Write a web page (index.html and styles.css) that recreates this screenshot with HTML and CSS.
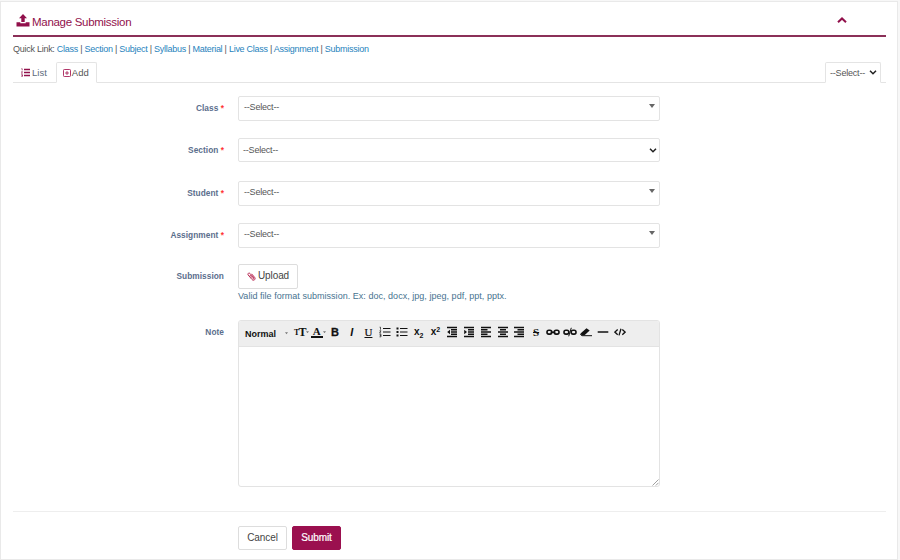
FILE: index.html
```html
<!DOCTYPE html>
<html lang="en">
<head>
<meta charset="utf-8">
<title>Manage Submission</title>
<link rel="stylesheet" href="styles.css">
</head>
<body>
<main class="panel">
  <header class="title-bar">
    <svg class="title-icon" viewBox="0 0 14 13"><path d="M7 0 11 4.2H8.7V8H5.3V4.2H3ZM.5 8.3H4.3V9.3H9.7V8.3H13.5V12.4H.5Z"/></svg>
    <h1>Manage Submission</h1>
    <svg class="collapse" viewBox="0 0 10 6"><path d="M1 5.2 5 1.4 9 5.2"/></svg>
  </header>
  <nav class="quick"><span>Quick Link: </span><a>Class</a> | <a>Section</a> | <a>Subject</a> | <a>Syllabus</a> | <a>Material</a> | <a>Live Class</a> | <a>Assignment</a> | <a>Submission</a></nav>
  <div class="tabs">
    <div class="tab"><svg class="list-icon" viewBox="0 0 9 9"><path d="M3 1.5H9M3 4.5H9M3 7.5H9" stroke-width="1.3"/><path d="M.4.7H1.2V2.4M.3 3.7H1.5L.4 5.3H1.6M.3 6.6H1.5V8.4H.3M.6 7.5H1.5" stroke-width=".7"/></svg>List</div>
    <div class="tab active"><svg class="add-icon" viewBox="0 0 8 8"><rect x=".5" y=".5" width="7" height="7" rx=".8"/><path d="M4 2.1V5.9M2.1 4H5.9"/></svg>Add</div>
    <div class="tab filter">--Select--<svg class="chevron" viewBox="0 0 8 5"><path d="M1 .8 4 3.8 7 .8"/></svg></div>
  </div>
  <form class="form">
    <div class="row r1"><label>Class <i>*</i></label><div class="control">--Select--<svg class="arrow" viewBox="0 0 6 4"><path d="M0 0H6L3 4Z"/></svg></div></div>
    <div class="row r2"><label>Section <i>*</i></label><div class="control native">--Select--<svg class="chevron" viewBox="0 0 8 5"><path d="M1 .8 4 3.8 7 .8"/></svg></div></div>
    <div class="row r3"><label>Student <i>*</i></label><div class="control">--Select--<svg class="arrow" viewBox="0 0 6 4"><path d="M0 0H6L3 4Z"/></svg></div></div>
    <div class="row r4"><label>Assignment <i>*</i></label><div class="control">--Select--<svg class="arrow" viewBox="0 0 6 4"><path d="M0 0H6L3 4Z"/></svg></div></div>
    <div class="row r5"><label>Submission</label>
      <div>
        <div class="btn upload"><svg class="clip" viewBox="0 0 9 9"><path d="M2.8 3 6 6.6C6.6 7.2 7.4 6.5 6.9 5.9L3 1.5C1.9.3.2 1.8 1.2 3L5 7.5C6.7 9.4 9.2 7.1 7.6 5.3L4.5 1.8"/></svg>Upload</div>
        <p class="hint">Valid file format submission. Ex: doc, docx, jpg, jpeg, pdf, ppt, pptx.</p>
      </div>
    </div>
    <div class="row r6"><label>Note</label>
      <div class="editor">
        <div class="toolbar">
          <span class="style">Normal</span><svg class="caret" viewBox="0 0 3 2"><path d="M0 0H3L1.5 2Z"/></svg>
          <div class="tools">
            <span class="serif tt"><small>T</small>T<svg class="caret" viewBox="0 0 3 2"><path d="M0 0H3L1.5 2Z"/></svg></span>
            <span class="serif color"><b>A</b><svg class="caret" viewBox="0 0 3 2"><path d="M0 0H3L1.5 2Z"/></svg></span>
            <span class="bold">B</span>
            <span class="italic">I</span>
            <span class="serif under">U</span>
            <svg viewBox="0 0 12 12"><path d="M4 2.5H11.5M4 6H11.5M4 9.5H11.5"/><path class="thin" d="M.6 1.2H1.5V3.7M.5 4.8H2L.6 7H2.1M.5 8.3H2V10.8H.5M.8 9.5H2"/></svg>
            <svg viewBox="0 0 12 12"><path d="M4 2.5H11.5M4 6H11.5M4 9.5H11.5"/><path class="fill" d="M.5 1.5h2v2h-2ZM.5 5h2v2h-2ZM.5 8.5h2v2h-2Z"/></svg>
            <span class="script">x<sub>2</sub></span>
            <span class="script">x<sup>2</sup></span>
            <svg viewBox="0 0 12 12"><path class="thick" d="M1 1.5H11M5 3.8H11M5 6H11M5 8.2H11M1 10.5H11"/><path class="fill" d="M4 3.8V8.2L1.2 6Z"/></svg>
            <svg viewBox="0 0 12 12"><path class="thick" d="M1 1.5H11M5 3.8H11M5 6H11M5 8.2H11M1 10.5H11"/><path class="fill" d="M1.2 3.8V8.2L4 6Z"/></svg>
            <svg viewBox="0 0 12 12"><path class="thick" d="M1 1.5H11M1 3.8H7.5M1 6H11M1 8.2H7.5M1 10.5H11"/></svg>
            <svg viewBox="0 0 12 12"><path class="thick" d="M1 1.5H11M3 3.8H9M1 6H11M3 8.2H9M1 10.5H11"/></svg>
            <svg viewBox="0 0 12 12"><path class="thick" d="M1 1.5H11M4.5 3.8H11M1 6H11M4.5 8.2H11M1 10.5H11"/></svg>
            <span class="serif strike">S</span>
            <svg class="wide" viewBox="0 0 14 12"><rect class="thick" x="1" y="4.3" width="4.8" height="3.8" rx="1.8"/><rect class="thick" x="8.2" y="4.3" width="4.8" height="3.8" rx="1.8"/><path class="thick" d="M4.6 6.2H9.4"/></svg>
            <svg class="wide" viewBox="0 0 14 12"><rect class="thick" x="1" y="4.3" width="4.8" height="3.8" rx="1.8"/><rect class="thick" x="8.2" y="4.3" width="4.8" height="3.8" rx="1.8"/><path d="M8.3 1.8 5.7 10.3"/></svg>
            <svg class="wide" viewBox="0 0 14 12"><path class="fill" d="M1.5 7.6 7.5 2.2 10.7 4.4 5.5 9.2H2.6Z"/><path d="M1.2 8.2 3 9.7H13"/></svg>
            <svg viewBox="0 0 12 12"><path class="thick" d="M.7 6H11.3"/></svg>
            <svg viewBox="0 0 12 12"><path class="code" d="M3.7 3.5.9 6.1 3.7 8.7M8.3 3.5 11.1 6.1 8.3 8.7M7 2.8 5 9.4"/></svg>
          </div>
        </div>
        <div class="area"><svg class="grip" viewBox="0 0 7 7"><path d="M.5 6.5 6.5.5M3.8 6.5 6.5 3.8"/></svg></div>
      </div>
    </div>
    <footer class="actions"><div class="btn">Cancel</div><div class="btn primary">Submit</div></footer>
  </form>
</main>
</body>
</html>
```
FILE: styles.css
```css
* { box-sizing: border-box; }
body { margin: 0; height: 560px; padding: 1px 1px 0 0; background: #f7f7f7; font: 9px/12px "Liberation Sans", Arial, sans-serif; color: #555; overflow: hidden; }
svg { display: block; flex: none; fill: none; stroke: currentColor; }
.panel { width: 898px; height: 559px; padding: 0 12px; background: #fff; border: 1px solid #e9e9e9; }
.title-bar { display: flex; align-items: center; width: 873px; height: 35px; padding: 6px 39px 0 3px; border-bottom: 2px solid #8b3058; color: #91104b; }
.title-icon { width: 14px; height: 13px; fill: currentColor; stroke: none; margin-top: -2px; }
h1 { margin: 0 auto 0 2px; font-size: 11.5px; font-weight: 400; letter-spacing: -.29px; }
.collapse { width: 10px; height: 6px; stroke-width: 2; margin-top: -3px; }
.quick { height: 25px; padding-top: 6px; white-space: pre; letter-spacing: -.265px; }
.quick a { color: #2783bd; }
.tabs { display: flex; width: 873px; height: 21px; border-bottom: 1px solid #e4e4e4; }
.tab { display: flex; align-items: center; height: 21px; padding: 0 8px; color: #5d6b7c; font-size: 9.5px; }
.list-icon { width: 9px; height: 9px; margin-right: 2px; color: #91104b; }
.add-icon { width: 8px; height: 8px; margin-right: 1px; color: #a82058; stroke-width: .9; }
.active, .filter { border: 1px solid #e4e4e4; border-bottom-color: #fff; border-radius: 2px 2px 0 0; color: #555; }
.active { width: 41px; padding: 0 6px; margin-left: 1px; }
.filter { width: 56px; margin: 0 5px 0 auto; padding: 0 3px 0 4px; font-size: 9px; letter-spacing: -.2px; justify-content: space-between; }
.chevron { width: 8px; height: 5px; color: #222; stroke-width: 1.5; }
.form { width: 873px; padding-top: 13px; }
.row { display: grid; grid-template-columns: 212px 422px; column-gap: 13px; }
.r1 { height: 42px; } .r2 { height: 43px; } .r3 { height: 42px; } .r4 { height: 41px; } .r5 { height: 56px; } .r6 { height: 191px; }
label { padding-top: 6px; margin-right: 1px; text-align: right; font-size: 8.3px; font-weight: 700; letter-spacing: .05px; color: #5b6e8c; }
label i { color: #f33; font-style: normal; }
.control { display: flex; justify-content: space-between; height: 25px; padding: 4px 4px 0 5px; border: 1px solid #e3e3e3; border-radius: 2px; letter-spacing: -.2px; }
.native { height: 24px; padding: 5px 2px 0 4px; }
.arrow { width: 6px; height: 4px; margin-top: 3px; fill: #666; stroke: none; }
.native .chevron { margin-top: 4px; }
.btn { display: flex; align-items: center; justify-content: center; width: 49px; height: 24px; border: 1px solid #ddd; border-radius: 2px; color: #444; font-size: 10px; letter-spacing: -.08px; }
.upload { width: 60px; height: 25px; gap: 2px; padding-bottom: 1px; }
.clip { width: 9px; height: 9px; color: #b82852; stroke-width: 1; }
.hint { margin: 1px 0 0; color: #477390; white-space: nowrap; letter-spacing: .03px; }
.editor { display: flex; flex-direction: column; height: 167px; border: 1px solid #e3e3e3; border-radius: 3px; overflow: hidden; }
.toolbar { display: flex; align-items: center; height: 26px; padding-left: 6px; background: #eee; border-bottom: 1px solid #e3e3e3; color: #111; }
.style { width: 40px; font-size: 9px; font-weight: 700; }
.caret { width: 3px; height: 2.5px; fill: #777; stroke: none; }
.tools { display: grid; grid-template-columns: repeat(20, 16.77px); align-items: center; justify-items: center; height: 16px; margin: -3px 0 0 5px; }
.tools > span { display: flex; align-items: center; font-size: 10px; font-weight: 700; }
.tools > svg { width: 12px; height: 12px; stroke-width: 1; }
.tools > .wide { width: 14px; }
.tools .thin { stroke-width: .7; }
.tools .thick { stroke-width: 1.6; }
.tools .code { stroke-width: 1.3; }
.tools .fill { fill: currentColor; stroke: none; }
.serif { font-family: "Liberation Serif", serif; }
.tt small { font-size: 8px; margin-top: 2px; }
.tools .tt { font-size: 12px; letter-spacing: -.7px; }
.color b { border-bottom: 2px solid #111; line-height: 10px; padding: 0 2px; font-size: 11px; }
.tools .bold { font-size: 11px; -webkit-text-stroke: .3px; }
.tools .italic { font-size: 11px; font-style: italic; }
.tools .under { text-decoration: underline; font-size: 11px; font-weight: 400; -webkit-text-stroke: .2px; }
.script sub, .script sup { font-size: 7px; line-height: 7px; }
.script sub { margin-top: 6px; }
.script sup { margin-top: -5px; }
.tools .strike { text-decoration: line-through; font-size: 11px; }
.area { display: flex; flex: 1; align-items: flex-end; justify-content: flex-end; }
.grip { width: 7px; height: 7px; color: #888; stroke-width: .8; }
.actions { display: flex; gap: 5px; padding: 14px 0 0 225px; border-top: 1px solid #eee; }
.primary { background: #9b104f; border-color: #9b104f; color: #fff; -webkit-text-stroke: .2px; }
```
